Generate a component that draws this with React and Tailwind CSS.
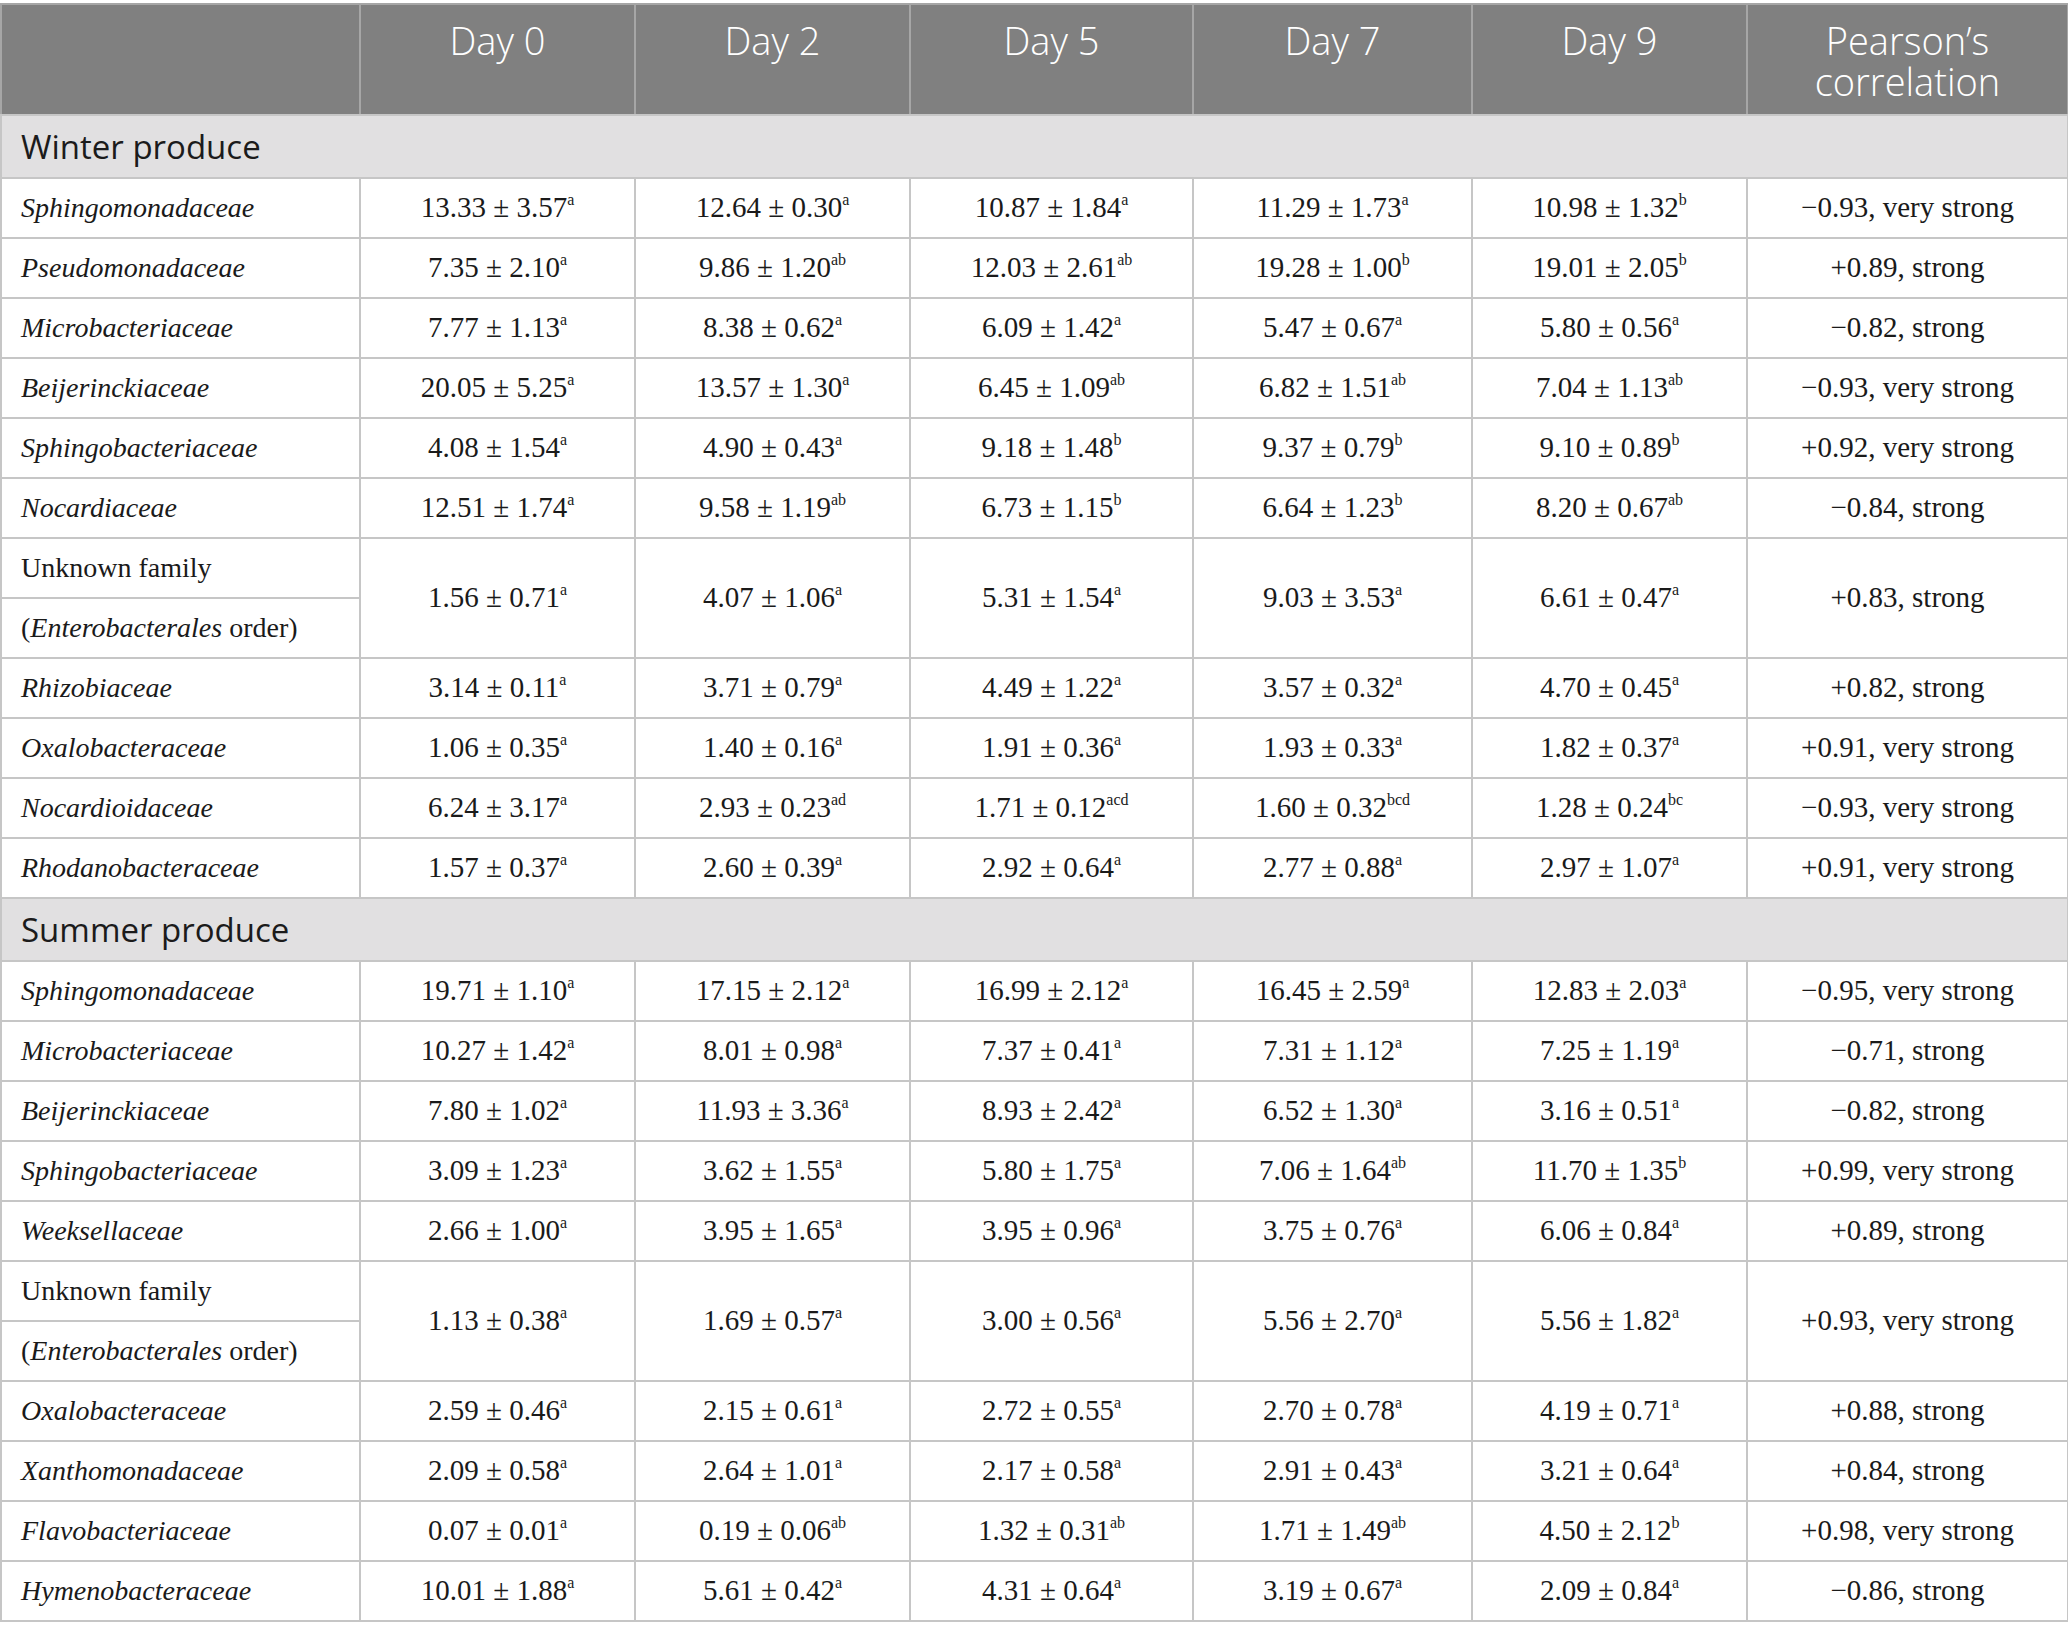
import React from 'react'

const winter = [
  ['Sphingomonadaceae', ['13.33 ± 3.57', 'a'], ['12.64 ± 0.30', 'a'], ['10.87 ± 1.84', 'a'], ['11.29 ± 1.73', 'a'], ['10.98 ± 1.32', 'b'], '−0.93, very strong'],
  ['Pseudomonadaceae', ['7.35 ± 2.10', 'a'], ['9.86 ± 1.20', 'ab'], ['12.03 ± 2.61', 'ab'], ['19.28 ± 1.00', 'b'], ['19.01 ± 2.05', 'b'], '+0.89, strong'],
  ['Microbacteriaceae', ['7.77 ± 1.13', 'a'], ['8.38 ± 0.62', 'a'], ['6.09 ± 1.42', 'a'], ['5.47 ± 0.67', 'a'], ['5.80 ± 0.56', 'a'], '−0.82, strong'],
  ['Beijerinckiaceae', ['20.05 ± 5.25', 'a'], ['13.57 ± 1.30', 'a'], ['6.45 ± 1.09', 'ab'], ['6.82 ± 1.51', 'ab'], ['7.04 ± 1.13', 'ab'], '−0.93, very strong'],
  ['Sphingobacteriaceae', ['4.08 ± 1.54', 'a'], ['4.90 ± 0.43', 'a'], ['9.18 ± 1.48', 'b'], ['9.37 ± 0.79', 'b'], ['9.10 ± 0.89', 'b'], '+0.92, very strong'],
  ['Nocardiaceae', ['12.51 ± 1.74', 'a'], ['9.58 ± 1.19', 'ab'], ['6.73 ± 1.15', 'b'], ['6.64 ± 1.23', 'b'], ['8.20 ± 0.67', 'ab'], '−0.84, strong'],
  [null, ['1.56 ± 0.71', 'a'], ['4.07 ± 1.06', 'a'], ['5.31 ± 1.54', 'a'], ['9.03 ± 3.53', 'a'], ['6.61 ± 0.47', 'a'], '+0.83, strong'],
  ['Rhizobiaceae', ['3.14 ± 0.11', 'a'], ['3.71 ± 0.79', 'a'], ['4.49 ± 1.22', 'a'], ['3.57 ± 0.32', 'a'], ['4.70 ± 0.45', 'a'], '+0.82, strong'],
  ['Oxalobacteraceae', ['1.06 ± 0.35', 'a'], ['1.40 ± 0.16', 'a'], ['1.91 ± 0.36', 'a'], ['1.93 ± 0.33', 'a'], ['1.82 ± 0.37', 'a'], '+0.91, very strong'],
  ['Nocardioidaceae', ['6.24 ± 3.17', 'a'], ['2.93 ± 0.23', 'ad'], ['1.71 ± 0.12', 'acd'], ['1.60 ± 0.32', 'bcd'], ['1.28 ± 0.24', 'bc'], '−0.93, very strong'],
  ['Rhodanobacteraceae', ['1.57 ± 0.37', 'a'], ['2.60 ± 0.39', 'a'], ['2.92 ± 0.64', 'a'], ['2.77 ± 0.88', 'a'], ['2.97 ± 1.07', 'a'], '+0.91, very strong'],
]

const summer = [
  ['Sphingomonadaceae', ['19.71 ± 1.10', 'a'], ['17.15 ± 2.12', 'a'], ['16.99 ± 2.12', 'a'], ['16.45 ± 2.59', 'a'], ['12.83 ± 2.03', 'a'], '−0.95, very strong'],
  ['Microbacteriaceae', ['10.27 ± 1.42', 'a'], ['8.01 ± 0.98', 'a'], ['7.37 ± 0.41', 'a'], ['7.31 ± 1.12', 'a'], ['7.25 ± 1.19', 'a'], '−0.71, strong'],
  ['Beijerinckiaceae', ['7.80 ± 1.02', 'a'], ['11.93 ± 3.36', 'a'], ['8.93 ± 2.42', 'a'], ['6.52 ± 1.30', 'a'], ['3.16 ± 0.51', 'a'], '−0.82, strong'],
  ['Sphingobacteriaceae', ['3.09 ± 1.23', 'a'], ['3.62 ± 1.55', 'a'], ['5.80 ± 1.75', 'a'], ['7.06 ± 1.64', 'ab'], ['11.70 ± 1.35', 'b'], '+0.99, very strong'],
  ['Weeksellaceae', ['2.66 ± 1.00', 'a'], ['3.95 ± 1.65', 'a'], ['3.95 ± 0.96', 'a'], ['3.75 ± 0.76', 'a'], ['6.06 ± 0.84', 'a'], '+0.89, strong'],
  [null, ['1.13 ± 0.38', 'a'], ['1.69 ± 0.57', 'a'], ['3.00 ± 0.56', 'a'], ['5.56 ± 2.70', 'a'], ['5.56 ± 1.82', 'a'], '+0.93, very strong'],
  ['Oxalobacteraceae', ['2.59 ± 0.46', 'a'], ['2.15 ± 0.61', 'a'], ['2.72 ± 0.55', 'a'], ['2.70 ± 0.78', 'a'], ['4.19 ± 0.71', 'a'], '+0.88, strong'],
  ['Xanthomonadaceae', ['2.09 ± 0.58', 'a'], ['2.64 ± 1.01', 'a'], ['2.17 ± 0.58', 'a'], ['2.91 ± 0.43', 'a'], ['3.21 ± 0.64', 'a'], '+0.84, strong'],
  ['Flavobacteriaceae', ['0.07 ± 0.01', 'a'], ['0.19 ± 0.06', 'ab'], ['1.32 ± 0.31', 'ab'], ['1.71 ± 1.49', 'ab'], ['4.50 ± 2.12', 'b'], '+0.98, very strong'],
  ['Hymenobacteraceae', ['10.01 ± 1.88', 'a'], ['5.61 ± 0.42', 'a'], ['4.31 ± 0.64', 'a'], ['3.19 ± 0.67', 'a'], ['2.09 ± 0.84', 'a'], '−0.86, strong'],
]

const cell = 'border-2 border-[#c6c6c6] text-center align-middle text-[29px]'
const nameCell = 'border-2 border-[#c6c6c6] text-left align-middle pl-[19px] italic'

const Val = ({ v }) => (
  <>
    {v[0]}
    <sup className="text-[16px] top-[-12px]">{v[1]}</sup>
  </>
)

const Rows = ({ data }) =>
  data.map((r, i) => {
    if (r[0] === null) {
      return (
        <React.Fragment key={i}>
          <tr className="h-[60px]">
            <td className="border-2 border-[#c6c6c6] text-left align-middle pl-[19px]">Unknown family</td>
            {r.slice(1, 6).map((v, j) => (
              <td key={j} rowSpan={2} className={cell}>
                <Val v={v} />
              </td>
            ))}
            <td rowSpan={2} className={cell}>{r[6]}</td>
          </tr>
          <tr className="h-[60px]">
            <td className="border-2 border-[#c6c6c6] text-left align-middle pl-[19px]">
              (<i>Enterobacterales</i> order)
            </td>
          </tr>
        </React.Fragment>
      )
    }
    return (
      <tr key={i} className="h-[60px]">
        <td className={nameCell}>{r[0]}</td>
        {r.slice(1, 6).map((v, j) => (
          <td key={j} className={cell}>
            <Val v={v} />
          </td>
        ))}
        <td className={cell}>{r[6]}</td>
      </tr>
    )
  })

const Group = ({ label }) => (
  <tr className="h-[63px] bg-[#e1e0e1]">
    <td colSpan={7} className="border-2 border-[#c6c6c6] pl-[19px] align-middle text-[33px] text-[#1b1b1b] font-['Open_Sans',sans-serif] not-italic">
      {label}
    </td>
  </tr>
)

const heads = ['Day 0', 'Day 2', 'Day 5', 'Day 7', 'Day 9']

export default function App() {
  return (
    <div className="w-[2068px] h-[1639px] bg-white pt-[3px]">
      <table className="w-[2067px] border-collapse table-fixed font-['Liberation_Serif',serif] text-[28px] text-[#1a1a1a]">
        <colgroup>
          <col className="w-[359px]" />
          <col className="w-[275px]" />
          <col className="w-[275px]" />
          <col className="w-[283px]" />
          <col className="w-[279px]" />
          <col className="w-[275px]" />
          <col className="w-[321px]" />
        </colgroup>
        <thead>
          <tr className="h-[111px] bg-[#808080] text-white font-['Open_Sans',sans-serif] text-[38px] leading-[41px] font-light">
            <th className="border-2 border-[#a6a6a6] border-b-[#c6c6c6]"></th>
            {heads.map((h) => (
              <th key={h} className="border-2 border-[#a6a6a6] border-b-[#c6c6c6] align-top pt-[15px] font-light">
                {h}
              </th>
            ))}
            <th className="border-2 border-[#a6a6a6] border-b-[#c6c6c6] align-top pt-[15px] font-light">
              Pearson’s
              <br />
              correlation
            </th>
          </tr>
        </thead>
        <tbody>
          <Group label="Winter produce" />
          <Rows data={winter} />
          <Group label="Summer produce" />
          <Rows data={summer} />
        </tbody>
      </table>
    </div>
  )
}
